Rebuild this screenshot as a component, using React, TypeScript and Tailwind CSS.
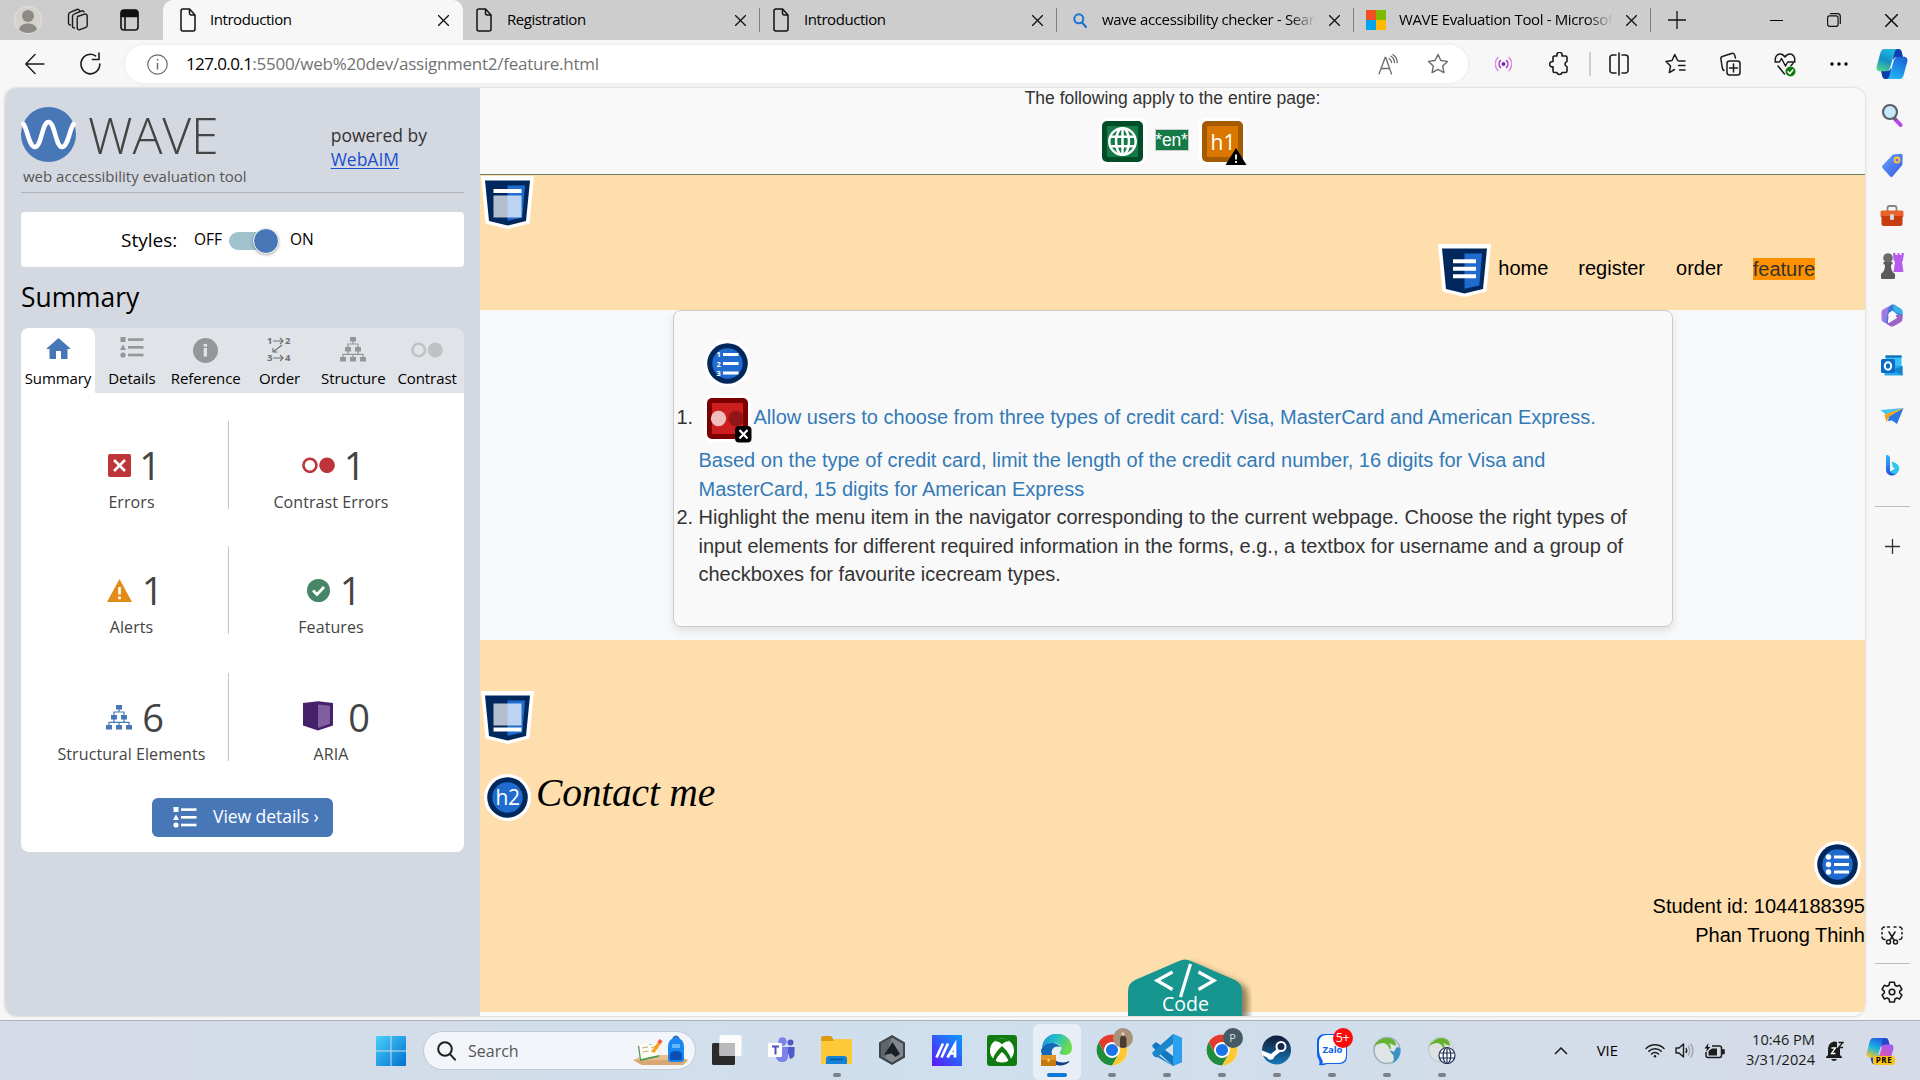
import type { ReactNode } from 'react';

type Kids = { children?: ReactNode };

/* ---------- browser chrome ---------- */

function FileIcon() {
  return (
    <svg width="16" height="24" viewBox="0 0 16 24" fill="none" stroke="#111" strokeWidth="1.5" strokeLinejoin="round" className="shrink-0">
      <path d="M1 3a2 2 0 0 1 2-2h6.5L15 7v14a2 2 0 0 1-2 2H3a2 2 0 0 1-2-2z" />
      <path d="M9.5 1v4.5a1.5 1.5 0 0 0 1.5 1.5h4" />
    </svg>
  );
}

function Cross({ size = 11 }: { size?: number }) {
  return (
    <svg width={size} height={size} viewBox="0 0 10 10" stroke="#111" strokeWidth="1.2" className="shrink-0">
      <path d="M0 0L10 10M10 0L0 10" />
    </svg>
  );
}

function Tab({ icon, title, active, faded }: { icon: ReactNode; title: string; active?: boolean; faded?: boolean }) {
  return (
    <div
      className={
        active
          ? 'flex h-10 w-[300px] shrink-0 items-center rounded-t-[10px] bg-[#f7f7f7] pr-[14px] pl-[17px]'
          : 'flex h-10 w-[297px] shrink-0 items-center pl-[13px]'
      }
    >
      <div className={active ? 'flex w-[29px] items-center' : 'flex w-[30px] items-center'}>{icon}</div>
      <div
        className={
          faded
            ? 'mb-0.5 w-[216px] overflow-hidden pl-[2px] text-[15px] leading-6 tracking-[-0.36px] whitespace-nowrap [mask-image:linear-gradient(to_right,#000_88%,transparent)]'
            : 'mb-0.5 w-[229px] pl-px text-[15px] leading-6 tracking-[-0.44px] whitespace-nowrap'
        }
      >
        {title}
      </div>
      <div className={faded ? 'ml-[13px]' : active ? 'ml-auto' : ''}>
        <Cross />
      </div>
      {!active && <div className="ml-auto h-[24px] w-px bg-[#808080]" />}
    </div>
  );
}

function TabBar() {
  return (
    <div className="flex h-10 items-center bg-[#cdcdcd]">
      <div className="flex w-[163px] shrink-0 items-center">
        <div className="ml-[14px] flex size-7 items-end justify-center overflow-hidden rounded-full border border-[#e4e2dd] bg-[#d4d1cc]">
          <svg width="26" height="26" viewBox="0 0 26 26" fill="#8d8984">
            <circle cx="13" cy="9" r="6" />
            <path d="M4 24c0-5 4-7.500 9-7.500s9 2.500 9 7.500a13 13 0 0 1-18 0z" />
          </svg>
        </div>
        <svg width="22" height="24" viewBox="0 0 22 24" fill="none" stroke="#1b1b1b" strokeWidth="1.4" strokeLinejoin="round" strokeLinecap="round" className="ml-[25px]">
          <path d="M10.500 8.500l7-2.300a2 2 0 0 1 2.700 1.800v9.500a2 2 0 0 1-1.300 1.900l-6 2.300a2 2 0 0 1-2.700-1.800V10" />
          <path d="M7.500 20a2 2 0 0 1-2-2V8.500a3 3 0 0 1 2-2.700L14.500 3a2 2 0 0 1 2.500 1" />
          <path d="M3.500 17A2 2 0 0 1 1.500 15V7a3 3 0 0 1 2-2.800L10 1.500a2 2 0 0 1 2.500 1" />
        </svg>
        <svg width="19" height="22" viewBox="0 0 19 22" fill="none" stroke="#111" strokeWidth="1.6" className="ml-[31px]">
          <rect x="1" y="1" width="17" height="20" rx="3" />
          <path d="M1.500 4a2.500 2.500 0 0 1 2.500-2.500h11A2.500 2.500 0 0 1 17.500 4v3.500h-16z" fill="#111" />
          <path d="M5 8v12.500" />
        </svg>
      </div>
      <Tab active title="Introduction" icon={<FileIcon />} />
      <Tab title="Registration" icon={<FileIcon />} />
      <Tab title="Introduction" icon={<FileIcon />} />
      <Tab
        faded
        title="wave accessibility checker - Search"
        icon={
          <svg width="14" height="15" viewBox="0 0 14 15" fill="none" stroke="#1a73d0" strokeWidth="2" strokeLinecap="round" className="ml-[3px]">
            <circle cx="5.800" cy="5.800" r="4.500" />
            <path d="M9.500 10l3.500 4" />
          </svg>
        }
      />
      <Tab
        faded
        title="WAVE Evaluation Tool - Microsoft"
        icon={
          <div className="-ml-px grid size-5 grid-cols-2 grid-rows-2">
            <i className="bg-[#f25022]" />
            <i className="bg-[#7fba00]" />
            <i className="bg-[#00a4ef]" />
            <i className="bg-[#ffb900]" />
          </div>
        }
      />
      <svg width="18" height="18" viewBox="0 0 18 18" stroke="#111" strokeWidth="1.3" className="ml-[17px]">
        <path d="M9 0V18M0 9H18" />
      </svg>
      <div className="ml-auto flex items-center pr-[22px]">
        <div className="mr-[44px] h-px w-[13px] bg-black" />
        <svg width="14" height="14" viewBox="0 0 14 14" fill="none" stroke="#111" strokeWidth="1.2" className="mr-[44px]">
          <rect x="0.600" y="2.800" width="10.500" height="10.500" rx="2" />
          <path d="M3 .7h7.500A2.800 2.800 0 0 1 13.300 3.500V11" />
        </svg>
        <Cross size={13} />
      </div>
    </div>
  );
}

function Cell({ children }: Kids) {
  return <div className="flex w-[55px] shrink-0 items-center justify-center">{children}</div>;
}

const line = { fill: 'none', stroke: '#1b1b1b', strokeWidth: 1.4, strokeLinejoin: 'round', strokeLinecap: 'round' } as const;

function StarPath() {
  return <path d="M11 1.500l2.900 6 6.600.9-4.800 4.600 1.200 6.600L11 16.400l-5.900 3.200 1.200-6.600L1.500 8.400l6.600-.9z" />;
}

function Copilot({ size, uid, colors }: { size: number; uid: string; colors: string[] }) {
  return (
    <svg width={size} height={size} viewBox="0 0 32 32">
      <defs>
        <linearGradient id={uid + 'a'} x1="0.600" y1="0" x2="0.200" y2="1">
          <stop offset="0" stopColor={colors[0]} />
          <stop offset="0.500" stopColor={colors[1]} />
          <stop offset="1" stopColor={colors[2]} />
        </linearGradient>
        <linearGradient id={uid + 'b'} x1="0.800" y1="0" x2="0.300" y2="1">
          <stop offset="0" stopColor={colors[3]} />
          <stop offset="1" stopColor={colors[4]} />
        </linearGradient>
      </defs>
      <path d="M18 1h4.500c2 0 2.800 1.200 3.300 3l1.200 5h-6c-2.500 0-3.500 1.500-4.200 4z" fill={colors[5]} />
      <path d="M14 31H9.500c-2 0-2.800-1.200-3.300-3L5 23h6c2.500 0 3.500-1.500 4.200-4z" fill={colors[5]} />
      <path d="M8.500 1H22c-2 0-3 1.500-3.500 3.500L14 20c-.6 2-1.800 3.300-4 3.300H4.500C1 23.300 0 21 .8 18L4.500 4.500C5.200 2.300 6.400 1 8.500 1z" fill={`url(#${uid}a)`} />
      <path d="M23.500 31H10c2 0 3-1.500 3.500-3.500L18 12c.6-2 1.800-3.300 4-3.300h5.500c3.500 0 4.500 2.300 3.700 5.300l-3.700 13.500c-.7 2.200-1.900 3.500-4 3.500z" fill={`url(#${uid}b)`} />
    </svg>
  );
}

function Toolbar() {
  return (
    <div className="flex h-12 items-center bg-[#f7f7f7]">
      <div className="flex w-[125px] shrink-0 items-center pl-[25px]">
        <svg width="20" height="22" viewBox="0 0 20 22" {...line}>
          <path d="M19 11H1M10 1.500L.8 11l9.200 9.500" />
        </svg>
        <svg width="21" height="24" viewBox="0 0 21 24" {...line} strokeWidth={1.6} className="ml-[35px]">
          <path d="M19.800 12A9.400 9.800 0 1 1 15.500 3.800M19 1v6.500h-6.500" />
        </svg>
      </div>
      <div className="flex h-[38px] w-[1343px] shrink-0 items-center rounded-full bg-white pl-[22px] shadow-[0_0_3px_1px_#ececec]">
        <svg width="21" height="21" viewBox="0 0 21 21" fill="none" stroke="#6b6b6b" strokeWidth="1.200">
          <circle cx="10.500" cy="10.500" r="9.700" />
          <path d="M10.500 9v6.500M10.500 5v1.600" strokeWidth="1.500" />
        </svg>
        <span className="ml-[18px] text-[17px] tracking-[-0.26px] text-[#727272]">
          <span className="tracking-[-0.600px] text-black">127.0.0.1</span>:5500/web%20dev/assignment2/feature.html
        </span>
        <div className="mr-[19px] ml-auto flex items-center gap-[29px]">
          <svg width="20" height="21" viewBox="0 0 20 21" fill="none" stroke="#6b6b6b" strokeWidth="1.300" strokeLinecap="round">
            <path d="M1 20L7.200 3.500h.6L13.500 20M3.300 14.500h8.200M11 4.500c1.700 1 2.500 2.300 2.500 4M13 2.300c2.300 1.500 3.400 3.500 3.400 6.200M15 .7c2.800 1.800 4.200 4.300 4.200 7.800" />
          </svg>
          <svg width="22" height="22" viewBox="0 0 22 22" {...line} stroke="#6b6b6b">
            <StarPath />
          </svg>
        </div>
      </div>
      <div className="ml-[8px] flex items-center">
        <Cell>
          <svg width="17" height="16" viewBox="0 0 17 16" fill="none" stroke="#9b30b8" strokeWidth="1.500" strokeLinecap="round">
            <circle cx="8.500" cy="8" r="2" fill="#8a1fb0" stroke="none" />
            <path d="M5.500 4.500a5 5 0 0 0 0 7M11.500 4.500a5 5 0 0 1 0 7" />
            <path d="M3 1.500a9 9 0 0 0 0 13M14 1.500a9 9 0 0 1 0 13" stroke="#dd8ae6" />
          </svg>
        </Cell>
        <Cell>
          <svg width="20" height="24" viewBox="0 0 20 24" {...line} strokeWidth={1.6}>
            <path d="M4 5.500a1.500 1.500 0 0 1 1.500-1.500H8a2.700 2.700 0 1 1 5 0h3.500A1.500 1.500 0 0 1 18 5.500V9.500a2.700 2.700 0 0 0 0 5.200V19a1.500 1.500 0 0 1-1.500 1.500h-3.400a2.700 2.700 0 0 1-5.200 0H5.500A1.500 1.500 0 0 1 4 19v-4.200a2.700 2.700 0 1 1 0-5.200z" />
          </svg>
        </Cell>
        <div className="ml-[3px] h-6 w-[2px] bg-[#cfcfcf]" />
        <Cell>
          <svg width="20" height="24" viewBox="0 0 20 24" {...line} strokeWidth={1.6} className="ml-px">
            <path d="M10 1v22M7 3H3.500A2.500 2.500 0 0 0 1 5.500v13A2.500 2.500 0 0 0 3.500 21H7M13 3h3.500A2.500 2.500 0 0 1 19 5.500v13a2.500 2.500 0 0 1-2.500 2.500H13" />
          </svg>
        </Cell>
        <Cell>
          <svg width="21" height="22" viewBox="0 0 21 22" {...line} strokeWidth={1.5} className="ml-[3px]">
            <path d="M13.500 8H20M13.500 12.500H20M14.500 17H20M12.500 7.200L9.800 1.500 7 7.500 1 8.400l4.500 4.600L4.300 19.600 9.500 16.500" />
          </svg>
        </Cell>
        <Cell>
          <svg width="21" height="24" viewBox="0 0 21 24" {...line} strokeWidth={1.5} className="ml-[3px]">
            <rect x="7" y="9" width="13" height="14" rx="2.500" />
            <path d="M13.500 12v8M9.500 16h8M4 18.500C2.800 18 2.500 17 2.300 16L.9 7A2.500 2.500 0 0 1 3 4.200L11.500 1.500A2.500 2.500 0 0 1 14.600 3L15.500 6" />
          </svg>
        </Cell>
        <Cell>
          <svg width="22" height="25" viewBox="0 0 22 25" {...line} strokeWidth={1.5} className="ml-[2px]">
            <path d="M1.500 9.500C.5 5 3 2 6 2c2.200 0 3.800 1.200 5 3 1.200-1.800 2.800-3 5-3 3 0 5.500 3 4.500 7.500M1 10h4.500l2-3.500 4 7.500 2.200-4H21M4 14l6.500 8M17 13.500l2-2" />
            <circle cx="16.500" cy="19.500" r="5" fill="#107c10" stroke="none" />
            <path d="M14 19.700l1.900 1.900 3-3.600" stroke="#fff" />
          </svg>
        </Cell>
        <Cell>
          <svg width="18" height="4" viewBox="0 0 18 4" className="ml-px">
            <circle cx="2" cy="2" r="1.700" />
            <circle cx="9" cy="2" r="1.700" />
            <circle cx="16" cy="2" r="1.700" />
          </svg>
        </Cell>
        <div className="flex w-[52px] justify-center">
          <Copilot size={32} uid="cpt" colors={['#20b8e0', '#1390c4', '#52d48c', '#1a63d8', '#22b6f5', '#0b3fae']} />
        </div>
      </div>
    </div>
  );
}

/* ---------- WAVE side panel ---------- */

function ListShapes({ color }: { color: string }) {
  return (
    <svg width="24" height="21" viewBox="0 0 24 21" fill={color}>
      <rect x="0.500" y="0" width="5" height="5" />
      <path d="M3 7.500l3 5.500H0z" />
      <circle cx="3" cy="18" r="2.600" />
      <rect x="8" y="1.300" width="15.500" height="2.600" />
      <rect x="8" y="9" width="15.500" height="2.600" />
      <rect x="8" y="16.700" width="15.500" height="2.600" />
    </svg>
  );
}

function Tree({ color }: { color: string }) {
  return (
    <svg width="26" height="25" viewBox="0 0 26 25" fill={color}>
      <rect x="10" y="0" width="6" height="4.500" />
      <rect x="5" y="10" width="6" height="4.500" />
      <rect x="15" y="10" width="6" height="4.500" />
      <rect x="0" y="20" width="6" height="4.500" />
      <rect x="10" y="20" width="6" height="4.500" />
      <rect x="20" y="20" width="6" height="4.500" />
      <path d="M13 4v3M8 10.500V7h10v3.500M8 14v3.300M18 14v3.300M3 20.500v-3.200h20v3.200M13 17v3.500" fill="none" stroke={color} strokeWidth="1.200" />
    </svg>
  );
}

function Eyes({ color, w }: { color: string; w: number }) {
  return (
    <svg width={w} height={w / 2} viewBox="0 0 32 16">
      <circle cx="7.700" cy="8" r="6.300" fill="none" stroke={color} strokeWidth="2.600" />
      <circle cx="24.300" cy="8" r="7.600" fill={color} />
    </svg>
  );
}

function PanelTab({ icon, label, active }: { icon: ReactNode; label: string; active?: boolean }) {
  return (
    <div
      className={
        active
          ? 'flex h-[65px] w-[74px] shrink-0 flex-col items-center rounded-t-lg bg-white'
          : 'flex h-[65px] w-[73.800px] shrink-0 flex-col items-center'
      }
    >
      <div className="flex h-[43px] items-center justify-center">{icon}</div>
      <div className="-mt-[2px] text-[15px] leading-[18px] tracking-[-0.08px] whitespace-nowrap">{label}</div>
    </div>
  );
}

function Stat({ icon, value, label, right, gap }: { icon: ReactNode; value: string; label: string; right?: boolean; gap: string }) {
  return (
    <div className={right ? 'flex w-[204px] flex-col items-center' : 'flex h-[88px] w-[194px] flex-col items-center border-r border-[#c4c4c4]'}>
      <div className={`mt-[19px] flex h-[50px] items-center ${gap}`}>
        {icon}
        <span className="text-[38px] leading-[50px] text-[#444]">{value}</span>
      </div>
      <div className="text-base leading-6 tracking-[0.08px] text-[#444]">{label}</div>
    </div>
  );
}

function WavePanel() {
  return (
    <aside className="flex w-[475px] shrink-0 flex-col bg-[#d4d8e0] px-4">
      <div className="flex h-[105px] justify-between border-b border-[#b0b2b5] pt-[19px]">
        <div>
          <div className="flex items-center">
            <svg width="55" height="55" viewBox="0 0 55 55">
              <circle cx="27.500" cy="27.500" r="27.500" fill="#4877b7" />
              <path d="M2.500 17C6 21 8 40 14 40c6.500 0 7-25 13.500-25S34.500 40 41 40c6 0 8-19 11.500-23" fill="none" stroke="#fff" strokeWidth="4.600" strokeLinecap="round" />
            </svg>
            <span className="mt-px ml-[12px] text-[50px] leading-[54px] font-light tracking-[-0.200px] text-[#444]">WAVE</span>
          </div>
          <div className="mt-[4px] ml-[2px] text-[15px] leading-5 text-[#555]">web accessibility evaluation tool</div>
        </div>
        <div className="mt-[16px] mr-[37px] text-[17.500px] leading-6 text-[#333]">
          powered by
          <br />
          <span className="text-[#1a50d0] underline underline-offset-2">WebAIM</span>
        </div>
      </div>
      <div className="mt-[19px] flex h-[55px] items-center rounded bg-white pt-[2px] pl-[100px]">
        <span className="w-[73px] text-[19px]">Styles:</span>
        <span className="-mt-px w-[35px] text-[15.500px]">OFF</span>
        <span className="flex h-[18px] w-[50px] items-center justify-end rounded-full bg-[#a0c2cc]">
          <i className="size-[26px] shrink-0 rounded-full border border-white bg-[#4877b7] shadow-[0_1px_3px_#0005]" />
        </span>
        <span className="-mt-px ml-[11px] text-[15.500px]">ON</span>
      </div>
      <h2 className="flex h-[61px] items-center text-[26.400px]">Summary</h2>
      <div className="flex h-[65px] rounded-t-lg bg-[#e0e3e8]">
        <PanelTab
          active
          label="Summary"
          icon={
            <svg width="25" height="21" viewBox="0 0 25 21" fill="#4877b7" className="-mt-[2px]">
              <path d="M12.500 0L25 11h-3.500v10h-6.500v-8h-5v8H3.500V11H0z" />
            </svg>
          }
        />
        <PanelTab label="Details" icon={<div className="-mt-[4px] flex"><ListShapes color="#949799" /></div>} />
        <PanelTab
          label="Reference"
          icon={
            <svg width="25" height="25" viewBox="0 0 25 25" className="mt-px">
              <circle cx="12.500" cy="12.500" r="12.500" fill="#949799" />
              <path d="M10.700 10h3.300v8.500h-3.300zM10.700 6h3.300v2.800h-3.300z" fill="#e0e3e8" />
            </svg>
          }
        />
        <PanelTab
          label="Order"
          icon={
            <svg width="24" height="25" viewBox="0 0 24 25" fill="none" stroke="#6f7173" strokeWidth="1.100">
              <g fill="#6f7173" stroke="none" fontSize="9.500" fontWeight="700" fontFamily="Open Sans">
                <text x="0" y="7">1</text>
                <text x="18" y="7">2</text>
                <text x="0" y="24">3</text>
                <text x="18" y="24">4</text>
              </g>
              <path d="M6 4h10M13 1l3 3-3 3M6 21h10M13 18l3 3-3 3M15 8l-9 7M6 11v4h4.500" />
            </svg>
          }
        />
        <PanelTab label="Structure" icon={<Tree color="#949799" />} />
        <PanelTab label="Contrast" icon={<div className="mt-px flex"><Eyes color="#bfc1c5" w={32} /></div>} />
      </div>
      <div className="h-[459px] rounded-b-lg bg-white">
        <div className="flex h-[125px] items-start pt-[28px] pl-[14px]">
          <Stat
            gap="gap-[8px] pl-[6px]"
            label="Errors"
            value="1"
            icon={
              <svg width="23" height="23" viewBox="0 0 23 23">
                <rect width="23" height="23" rx="2" fill="#bd3538" />
                <path d="M6 6l11 11M17 6L6 17" stroke="#fff" strokeWidth="2.600" />
              </svg>
            }
          />
          <Stat right gap="gap-[9px] pl-[5px]" label="Contrast Errors" value="1" icon={<Eyes color="#bd3538" w={33} />} />
        </div>
        <div className="flex h-[127px] items-start pt-[28px] pl-[14px]">
          <Stat
            gap="gap-[10px] pl-[7px]"
            label="Alerts"
            value="1"
            icon={
              <svg width="25" height="23" viewBox="0 0 25 23">
                <path d="M12.500 0L25 23H0z" fill="#e28b17" />
                <path d="M12.500 8v7.500M12.500 17.500v2.800" stroke="#fff" strokeWidth="2.600" />
              </svg>
            }
          />
          <Stat
            right
            gap="gap-[10px] pl-[6px]"
            label="Features"
            value="1"
            icon={
              <svg width="23" height="23" viewBox="0 0 23 23">
                <circle cx="11.500" cy="11.500" r="11.500" fill="#468566" />
                <path d="M6 11.500l4 4 7-7.500" fill="none" stroke="#fff" strokeWidth="2.800" />
              </svg>
            }
          />
        </div>
        <div className="flex h-[153px] items-start pt-[28px] pl-[14px]">
          <Stat gap="gap-[10px] pl-[7px]" label="Structural Elements" value="6" icon={<Tree color="#4877b7" />} />
          <Stat
            right
            gap="gap-[15px] pl-[11px]"
            label="ARIA"
            value="0"
            icon={
              <svg width="30" height="30" viewBox="0 0 30 30" className="-mt-[3px]">
                <path d="M0 2L15 .3 30 2v22.500L15 29.500 0 24.500z" fill="#47206b" />
                <path d="M15 3.500l12 1.300v18L15 27z" fill="#7f5f9e" />
              </svg>
            }
          />
        </div>
        <div className="ml-[131px] flex h-[39px] w-[181px] items-center rounded-md bg-[#4877b7] pl-[21px] text-[17.500px] tracking-[-0.040px] text-white">
          <ListShapes color="#fff" />
          <span className="-mt-0.5 ml-[16px] whitespace-nowrap">View details ›</span>
        </div>
      </div>
    </aside>
  );
}

/* ---------- annotated web page ---------- */

function Shield({ children }: Kids) {
  return (
    <svg width="53" height="53" viewBox="0 0 53 53" className="shrink-0">
      <path d="M0 0h53l-4.500 47.500L26.500 53 4.500 47.500z" fill="#fff" />
      <path d="M4 4.500h45L45 45l-18.500 4.500L8 45z" fill="#00285c" />
      <path d="M26.500 9.500h17.500l-2.700 32-14.800 3.300z" fill="#206bcf" />
      {children}
    </svg>
  );
}

function Disc({ children }: Kids) {
  return (
    <svg width="47" height="47" viewBox="0 0 47 47" className="shrink-0">
      <circle cx="23.500" cy="23.500" r="23.500" fill="#fff" />
      <circle cx="23.500" cy="23.500" r="20.300" fill="#00285c" />
      <circle cx="23.500" cy="23.500" r="15.200" fill="#206bcf" />
      {children}
    </svg>
  );
}

function Tile({ border, fill, children }: Kids & { border: string; fill: string }) {
  return (
    <svg width="50" height="50" viewBox="0 0 50 50" className="shrink-0 overflow-visible">
      <rect x="0" y="0" width="47" height="47" rx="7" fill="#fff" />
      <rect x="3" y="3" width="41" height="41" rx="5" fill={border} />
      <rect x="8" y="8" width="31" height="31" fill={fill} />
      {children}
    </svg>
  );
}

function PageSummary() {
  return (
    <div className="flex h-[87px] flex-col items-center border-b border-[#6f8266] bg-[#f9f9f9] text-[#333]">
      <div className="h-[30px] text-[17.500px] leading-[20px]">The following apply to the entire page:</div>
      <div className="flex h-[50px] items-start pl-[2px]">
        <Tile border="#014d27" fill="#147a48">
          <g fill="none" stroke="#fff" strokeWidth="2.500">
            <circle cx="23.500" cy="23.500" r="13.200" />
            <ellipse cx="23.500" cy="23.500" rx="6.500" ry="13.200" />
            <path d="M23.500 10v27M11.500 18.800h24M11.500 28.200h24" />
          </g>
        </Tile>
        <div className="mt-[11px] ml-[6px] flex h-[22px] w-[34px] items-center justify-center border border-[#ccc] bg-[#147a48] text-[17.500px] tracking-[-0.200px] whitespace-nowrap text-white">
          *en*
        </div>
        <div className="ml-[10px]">
          <Tile border="#a35a00" fill="#da7700">
            <text x="24" y="31.500" textAnchor="middle" fontSize="21" fill="#fff" fontFamily="Open Sans">
              h1
            </text>
            <path d="M37 30l10.500 17h-21z" />
            <path d="M37 36.500v5M37 43v2" stroke="#fff" strokeWidth="1.800" />
          </Tile>
        </div>
      </div>
    </div>
  );
}

function WebPage() {
  return (
    <main className="flex w-[1385px] shrink-0 flex-col bg-[#f8f9fb] font-['Liberation_Sans',Arial,sans-serif] text-xl leading-[28.570px]">
      <PageSummary />
      <header className="h-[135px] bg-[#ffdead] pl-px text-black">
        <div className="flex h-[69px] items-start pt-px">
          <Shield>
            <rect x="12.500" y="13" width="28" height="4" fill="#fff" />
            <rect x="12.500" y="19.500" width="28" height="22" fill="#fff" fillOpacity="0.700" />
          </Shield>
        </div>
        <nav className="flex h-[53px] items-center justify-end pr-[50px]">
          <Shield>
            <path d="M15 15.200h23v4H15zM15 22.700h23v4H15zM15 30.200h23v4H15z" fill="#fff" />
          </Shield>
          <span className="-mt-1 ml-[7px]">home</span>
          <span className="-mt-1 ml-[30px]">register</span>
          <span className="-mt-1 ml-[31px]">order</span>
          <span className="-mt-1 ml-[30px] bg-[#ff9100] leading-[22px] text-[#333]">feature</span>
        </nav>
      </header>
      <section className="ml-[193px] h-[317px] w-[1000px] rounded-lg border border-[#ccc] bg-[#f9f9f9] pt-[29px] pl-[24px] text-[#333] shadow-[0_4px_8px_#0000001a]">
        <div className="flex h-[55px] items-start pl-[5.500px]">
          <Disc>
            <g fill="#fff" fontSize="7.500" fontWeight="700" fontFamily="Open Sans">
              <text x="12.500" y="17">1</text>
              <text x="12.500" y="26.500">2</text>
              <text x="12.500" y="36">3</text>
            </g>
            <path d="M19 13h15.500v3H19zM19 22h15.500v3H19zM19 31.500h15.500v3H19z" fill="#fff" />
          </Disc>
        </div>
        <ol className="pl-[0.500px] whitespace-nowrap">
          <li className="text-[#337ab7]">
            <div className="flex h-[65px]">
              <span className="-ml-[22px] w-[27px] pt-[8px] text-[#333]">1.</span>
              <div>
                <Tile border="#7c0000" fill="#cc1e1f">
                  <circle cx="14.500" cy="23.500" r="7.700" fill="#f0bdbd" />
                  <circle cx="32" cy="23.500" r="7.700" fill="#8f1517" />
                  <rect x="31" y="31" width="16.500" height="16.500" rx="4" />
                  <path d="M35.500 35l8 8.500M43.500 35l-8 8.500" stroke="#fff" strokeWidth="2.200" />
                </Tile>
              </div>
              <span className="pt-[8px]">Allow users to choose from three types of credit card: Visa, MasterCard and American Express.</span>
            </div>
            <div className="-mt-[14px]">
              Based on the type of credit card, limit the length of the credit card number, 16 digits for Visa and
              <br />
              MasterCard, 15 digits for American Express
            </div>
          </li>
          <li className="flex">
            <span className="-ml-[22px] w-[22px]">2.</span>
            <span>
              Highlight the menu item in the navigator corresponding to the current webpage. Choose the right types of
              <br />
              input elements for different required information in the forms, e.g., a textbox for username and a group of
              <br />
              checkboxes for favourite icecream types.
            </span>
          </li>
        </ol>
      </section>
      <footer className="relative mt-[13px] h-[372px] bg-[#ffdead] pt-[51px] pl-px text-black">
        <Shield>
          <rect x="12.500" y="12.500" width="28" height="22" fill="#fff" fillOpacity="0.700" />
          <rect x="12.500" y="36.500" width="28" height="4" fill="#fff" />
        </Shield>
        <div className="mt-[30px] flex items-center pl-[3px]">
          <Disc>
            <text x="23.500" y="31" textAnchor="middle" fontSize="21" fill="#fff" fontFamily="Open Sans" letterSpacing="-0.500">
              h2
            </text>
          </Disc>
          <h2 className="-mt-[8px] ml-[5px] font-['Liberation_Serif',serif] text-[39.500px] leading-[47px] tracking-[-0.200px] italic">Contact me</h2>
        </div>
        <div className="mt-[20px] flex justify-end pr-[4px]">
          <Disc>
            <path d="M20 14.500h15v3H20zM20 22h15v3H20zM20 29.500h15v3H20z" fill="#fff" />
            <circle cx="14.500" cy="16" r="2.700" fill="#fff" />
            <circle cx="14.500" cy="23.500" r="2.700" fill="#fff" />
            <circle cx="14.500" cy="31" r="2.700" fill="#fff" />
          </Disc>
        </div>
        <div className="mt-[4px] text-right">
          Student id: 1044188395
          <br />
          Phan Truong Thinh
        </div>
        <div className="absolute top-[318px] left-[648px] flex h-[58px] w-[124px] overflow-hidden">
          <svg width="124" height="58" viewBox="0 0 124 58">
            <defs>
              <filter id="codeShadow" x="-20%" y="-20%" width="140%" height="140%">
                <feDropShadow dx="6" dy="4" stdDeviation="3" floodColor="#4a3a20" floodOpacity="0.600" />
              </filter>
            </defs>
            <path d="M0 60V34q0-9 7-12L51 3q6-3 12 0l44 19q7 3 7 12v26z" fill="#17968e" filter="url(#codeShadow)" />
            <path d="M44.500 14L29 22.500 44.500 31.500M70.500 14l15.500 8.500-15.500 9M62.500 6L52.500 39" fill="none" stroke="#fff" strokeWidth="3.200" />
            <text x="57.500" y="53" textAnchor="middle" fontSize="19.500" fill="#fff" fontFamily="Open Sans">
              Code
            </text>
          </svg>
        </div>
      </footer>
    </main>
  );
}

/* ---------- Edge sidebar ---------- */

function Slot({ children }: Kids) {
  return <div className="flex h-[50px] items-center justify-center">{children}</div>;
}

function EdgeSidebar() {
  return (
    <aside className="flex w-[55px] shrink-0 flex-col pt-[2px] pr-px">
      <Slot>
        <svg width="22" height="24" viewBox="0 0 22 24">
          <path d="M13 15l6.500 7" stroke="#b844f0" strokeWidth="4" strokeLinecap="round" />
          <path d="M12.500 14l2.500 3" stroke="#666" strokeWidth="3" />
          <circle cx="9" cy="9" r="7" fill="#c5e8fb" stroke="#5b6066" strokeWidth="2.200" />
        </svg>
      </Slot>
      <Slot>
        <svg width="22" height="25" viewBox="0 0 22 25">
          <defs>
            <linearGradient id="tag" x1="0" y1="0" x2="1" y2="1">
              <stop offset="0" stopColor="#6aa5ff" />
              <stop offset="1" stopColor="#3358e0" />
            </linearGradient>
          </defs>
          <path d="M12 1.500L20 .8q1.700 0 1.700 1.700l-.4 9.500L11.500 23.500q-1.200 1.200-2.300 0L1.500 15q-1-1.200 0-2.500z" fill="url(#tag)" />
          <circle cx="16" cy="7" r="2.500" fill="#6b7ac0" stroke="#ffc83d" strokeWidth="1.800" />
        </svg>
      </Slot>
      <Slot>
        <svg width="24" height="22" viewBox="0 0 24 22" className="mt-[2px]">
          <path d="M7.500 6V3q0-2 2-2h5q2 0 2 2v3" fill="none" stroke="#848484" strokeWidth="1.800" />
          <rect x="0.500" y="5.500" width="23" height="7" rx="1.500" fill="#e8622a" />
          <path d="M1.500 11h21v8q0 2-2 2h-17q-2 0-2-2z" fill="#c73c11" />
          <rect x="10" y="9" width="4" height="6" rx="1.500" fill="#d5d8dc" />
        </svg>
      </Slot>
      <Slot>
        <svg width="24" height="28" viewBox="0 0 24 28" className="mt-px">
          <path d="M13 1h2.500v2h2V1h2v2h2V1H24l-1 7-1 2 1.500 10H13.500L15 10l-1.500-2z" fill="#b85cf0" />
          <circle cx="8" cy="6" r="4.800" fill="#6b6b6b" />
          <path d="M3.500 10h9v2.500H11c0 5 1 7 4 9.500v3.500q0 1.500-1.500 1.500h-11Q1 27 1 25.500V22c3-2.500 4-4.500 4-9.500H3.500z" fill="#5b5b5b" />
        </svg>
      </Slot>
      <Slot>
        <svg width="22" height="23" viewBox="0 0 22 23">
          <path d="M10 1L2 5.500Q.5 6.500.5 8v7q0 2 1.500 3l4 1.500 2-7z" fill="#9c7be0" />
          <path d="M10.500.8q1.500-.8 3 0L20 5q1.500 1 1.500 3v5l-6-3-4-3.500L7 10v9l-2 .5L7.500 4z" fill="#3f78db" />
          <path d="M11 0l9 5q1.500 1 1.500 3v2.500L14 8z" fill="#35b5e8" />
          <path d="M21.500 11v4q0 2-1.500 3l-7 4q-2 1-4 0l-5-3q3 .8 5-.7l7-4.300-1.500-3z" fill="#9b62c8" />
          <circle cx="11" cy="11.500" r="3.700" fill="#f7f7f7" />
        </svg>
      </Slot>
      <Slot>
        <svg width="22" height="22" viewBox="0 0 22 22" className="mt-px">
          <rect x="4.500" y="0.500" width="16" height="12" fill="#36c0f5" />
          <rect x="4.500" y="0.500" width="16" height="2" fill="#1066b5" />
          <path d="M3.500 10l18 1v9.500h-18z" fill="#28a8ea" />
          <path d="M21.500 11v9.500L11 15z" fill="#1484d0" />
          <rect x="0" y="4" width="14" height="14" rx="1.500" fill="#0a6cc8" />
          <ellipse cx="7" cy="11" rx="3.200" ry="3.700" fill="none" stroke="#fff" strokeWidth="2" />
        </svg>
      </Slot>
      <Slot>
        <svg width="24" height="18" viewBox="0 0 24 18" className="mt-[2px]">
          <path d="M.5 3L23.500 1 6 7.500z" fill="#45c5f0" />
          <path d="M23.500 1L17 17l-5-3.500-4 .5 1-5z" fill="#2a78e4" />
          <path d="M23.500 1L4.500 7.500 6.500 15.500l2.300-5.500z" fill="#f5a31d" />
        </svg>
      </Slot>
      <Slot>
        <svg width="15" height="22" viewBox="0 0 15 22">
          <defs>
            <linearGradient id="bing" x1="0" y1="0" x2="0" y2="1">
              <stop offset="0" stopColor="#37b8f5" />
              <stop offset="1" stopColor="#2250dd" />
            </linearGradient>
          </defs>
          <path d="M1 .5l3 1.200q1 .5 1 1.500v14.500L9 15.500l5-1q-.5 4-3.500 6-3 1.700-6 .4Q1 19.500 1 16z" fill="url(#bing)" />
          <path d="M6.500 7.500l4 1.500q4 2 3.800 6-1 3.500-4.500 5.500L5 18l5-3-2-1.700z" fill="#2cc5ef" />
        </svg>
      </Slot>
      <div className="mx-auto mt-[16px] h-px w-[35px] bg-[#bdbdbd]" />
      <svg width="15" height="15" viewBox="0 0 15 15" stroke="#333" strokeWidth="1.300" className="mx-auto mt-[32px]">
        <path d="M7.500 0V15M0 7.500H15" />
      </svg>
      <div className="mt-auto mb-[17px] flex flex-col items-center">
        <svg width="22" height="19" viewBox="0 0 22 19" {...line} strokeWidth={1.5}>
          <path d="M4 13.500H3.500a2.500 2.500 0 0 1-2.500-2.500M1 8V6.500M1 3.500A2.500 2.500 0 0 1 3.500 1M6.500 1h2M13 1h2M18.500 1A2.500 2.500 0 0 1 21 3.500M21 6.500V8M21 11a2.500 2.500 0 0 1-2.500 2.500M8 6l5 8M14 6l-5 8" />
          <circle cx="7.500" cy="16" r="2" />
          <circle cx="14.500" cy="16" r="2" />
        </svg>
        <div className="mt-[18px] h-px w-[35px] bg-[#bdbdbd]" />
        <svg width="22" height="22" viewBox="0 0 22 22" {...line} strokeWidth={1.6} className="mt-[17px]">
          <path d="M8.700 1.200h4.600l.7 3 1.700 1 3-.9 2.200 3.900-2.200 2.100v1.600l2.200 2.100-2.200 3.900-3-.9-1.700 1-.7 3H8.700l-.7-3-1.700-1-3 .9L1.100 14l2.200-2.100v-1.600L1.100 8.200l2.200-3.900 3 .9 1.700-1z" />
          <circle cx="11" cy="11" r="2.800" />
        </svg>
      </div>
    </aside>
  );
}

/* ---------- Windows taskbar ---------- */

function TaskIcon({ children, state }: Kids & { state?: 'open' | 'focus' }) {
  return (
    <div className={state === 'focus' ? 'mx-[3.500px] flex h-[56px] w-[48px] flex-col items-center rounded-md bg-[#e8eef6]' : 'flex h-[56px] w-[55px] flex-col items-center'}>
      <div className="relative mt-[9px] flex h-[34px] items-center justify-center">{children}</div>
      {state === 'open' && <i className="mt-[6px] h-[4px] w-[8px] rounded-full bg-[#7b8087]" />}
      {state === 'focus' && <i className="mt-[6px] h-[4px] w-[20px] rounded-full bg-[#0a78d4]" />}
    </div>
  );
}

function Chrome({ children }: Kids) {
  return (
    <>
      <svg width="32" height="32" viewBox="0 0 32 32">
        <circle cx="16" cy="16" r="15.500" fill="#fff" />
        <path d="M2.600 8.250A15.500 15.500 0 0 1 29.400 8.250H16a7.750 7.750 0 0 0-6.700 11.600z" fill="#e33b2e" />
        <path d="M29.400 8.250A15.500 15.500 0 0 1 16 31.500l6.700-11.600A7.750 7.750 0 0 0 16 8.250z" fill="#fcc934" />
        <path d="M16 31.500A15.500 15.500 0 0 1 2.600 8.250l6.700 11.600a7.750 7.750 0 0 0 13.400 0z" fill="#1e8e3e" />
        <circle cx="16" cy="16" r="7.700" fill="#fff" />
        <circle cx="16" cy="16" r="6.100" fill="#1a73e8" />
      </svg>
      <div className="absolute -top-[5px] -right-[5px] flex size-5 items-center justify-center overflow-hidden rounded-full">{children}</div>
    </>
  );
}

function Taskbar() {
  return (
    <div className="flex h-[60px] shrink-0 items-center border-t border-[#a9b0b9] bg-linear-to-r from-[#d6dbe7] via-[#cfdfed] to-[#d6dbe7]">
      <svg width="30" height="30" viewBox="0 0 30 30" className="ml-[376px] shrink-0">
        <defs>
          <linearGradient id="win" x1="0" y1="0" x2="1" y2="1">
            <stop offset="0" stopColor="#4bd0fb" />
            <stop offset="1" stopColor="#0070cf" />
          </linearGradient>
        </defs>
        <path d="M0 1q0-1 1-1h13.500v14.500H0zM15.500 0H29q1 0 1 1v13.500H15.500zM0 15.500h14.500V30H1q-1 0-1-1zM15.500 15.500H30V29q0 1-1 1H15.500z" fill="url(#win)" />
      </svg>
      <div className="ml-[17px] flex h-[39px] w-[273px] shrink-0 items-center rounded-full border border-[#bfcad6] bg-[#f2f5f9] pl-[13px]">
        <svg width="19" height="20" viewBox="0 0 19 20" fill="none" stroke="#1f1f1f" strokeWidth="2" strokeLinecap="round">
          <circle cx="8" cy="8" r="6.800" />
          <path d="M13 13.200l5 5.500" />
        </svg>
        <span className="ml-[12px] text-[16px] text-[#555]">Search</span>
        <svg width="57" height="32" viewBox="0 0 57 32" className="mr-[6px] ml-auto">
          <path d="M1 25l12-5h34l9 5-5 5H10z" fill="#e9bf8e" />
          <path d="M1 25h55l-5 5H10z" fill="#d9a774" />
          <path d="M6 11l11-2 9 1 1 12-19 4z" fill="#4d9b53" />
          <path d="M7 9l9-1 2 2 8-3 1 13-9 2-9 2z" fill="#fffdf2" />
          <path d="M10 13l6-1M10.500 17l6-1M19 13l5-2M19 17l5-2" stroke="#b8a98a" />
          <path d="M21 17l7-10" stroke="#f5a524" strokeWidth="3.500" />
          <path d="M27 8l2-3" stroke="#ef5b5b" strokeWidth="4" />
          <path d="M41 4q3-5 6 0" fill="none" stroke="#1565c0" strokeWidth="2" />
          <path d="M36 12q0-9 8-9t8 9v12q0 3-3 3H39q-3 0-3-3z" fill="#1a86f0" />
          <path d="M38 20q0-4 6-4t6 4v5H38z" fill="#0a4fb5" />
          <path d="M40 9h8v4h-8z" fill="#5fb8ff" />
        </svg>
      </div>
      <div className="ml-[3px] flex shrink-0 self-end">
        <TaskIcon>
          <svg width="30" height="32" viewBox="0 0 30 32">
            <rect x="0" y="9" width="23" height="22" rx="1.500" fill="#2b2b2b" />
            <rect x="7.500" y="1" width="22" height="21" rx="1.500" fill="#fbfbfb" />
            <path d="M7.500 9H23v13H7.500z" fill="#b9babb" />
          </svg>
        </TaskIcon>
        <TaskIcon>
          <svg width="27" height="26" viewBox="0 0 27 26">
            <circle cx="14.500" cy="4.500" r="4.200" fill="#7b83eb" />
            <circle cx="22.500" cy="5.500" r="3" fill="#5059c9" />
            <path d="M18 10h8.500v7q0 4-4.500 5z" fill="#5059c9" />
            <path d="M8.500 10H20v9q0 6-6 6-5 0-6-5z" fill="#7b83eb" />
            <rect x="0" y="6" width="14" height="14" rx="1" fill="#fff" />
            <path d="M4 9.500h7M7.500 9.500v8" stroke="#4b53bc" strokeWidth="2" />
          </svg>
        </TaskIcon>
        <TaskIcon state="open">
          <svg width="31" height="28" viewBox="0 0 31 28">
            <path d="M0 2q0-2 2-2h8l3 4h15v8H0z" fill="#e09b0c" />
            <path d="M0 5h12l3-2h14q2 0 2 2v23H0z" fill="#fdc938" />
            <path d="M5 28v-5q0-3 3-3h15q3 0 3 3v5z" fill="#1583d8" />
            <path d="M9 23.500h13" stroke="#0a559c" strokeWidth="1.500" />
          </svg>
        </TaskIcon>
        <TaskIcon>
          <svg width="28" height="31" viewBox="0 0 28 31">
            <path d="M14 0l13 7.500v15L14 30 1 22.500v-15z" fill="#3e444a" />
            <path d="M14 2.500l11 6.200V21L14 27.500 3 21V8.700z" fill="#80878e" />
            <path d="M14 2.500L3 8.700V21l4 2z" fill="#5e666e" />
            <path d="M14.500 7l7.500 12-4.500 3-4-3.500-7.500 1.500z" fill="#1c2024" />
          </svg>
        </TaskIcon>
        <TaskIcon>
          <svg width="30" height="31" viewBox="0 0 30 31">
            <defs>
              <linearGradient id="armoury" x1="0" y1="1" x2="1" y2="0">
                <stop offset="0" stopColor="#5b18f5" />
                <stop offset="1" stopColor="#0a9bff" />
              </linearGradient>
            </defs>
            <rect width="30" height="31" fill="url(#armoury)" />
            <path d="M4.500 22.500L11 8.500M9.500 22.500L16 8.500M15.500 22.500L23 9.500v13M18.500 18.500H23" fill="none" stroke="#fff" strokeWidth="2.700" />
          </svg>
        </TaskIcon>
        <TaskIcon>
          <svg width="30" height="31" viewBox="0 0 30 31">
            <rect width="30" height="31" rx="3" fill="#107c10" />
            <circle cx="15" cy="15.500" r="12" fill="#fff" />
            <path d="M7 6.500c3-.8 5.500.8 8 2.700 2.500-1.900 5-3.500 8-2.700C21 4.700 18.500 3.500 15 3.500S9 4.700 7 6.500zM6 24.500c.5-4.500 5-10 9-13.500 4 3.500 8.500 9 9 13.500-1.300 1.200-2 1.500-2.500 1.700-1-3.200-3.500-6.700-6.500-9.200-3 2.500-5.500 6-6.500 9.200-.7-.3-1.500-.8-2.500-1.700z" fill="#107c10" />
          </svg>
        </TaskIcon>
        <TaskIcon state="focus">
          <svg width="31" height="32" viewBox="0 0 31 32">
            <defs>
              <linearGradient id="edgeTop" x1="0" y1="0" x2="1" y2="0.300">
                <stop offset="0" stopColor="#1b8fd6" />
                <stop offset="0.500" stopColor="#25bfc9" />
                <stop offset="1" stopColor="#6fdc4c" />
              </linearGradient>
            </defs>
            <path d="M1 14A15 14.500 0 0 1 31 14c0 5-3.500 7-7 7s-5.500-1.200-5.500-2.500S20.500 17 20.500 14.500 17 9 12 9 3 11 1 14z" fill="url(#edgeTop)" />
            <path d="M0 17C1 11.500 6 8.500 11.500 9c4 .3 7 2.500 8 4-6-2-9 2-9 6 0 6 5.500 10 11.500 10q3 0 6-2Q23 32 15.500 31 2 30 0 17z" fill="#1368b8" />
            <path d="M10.500 18c-.5 6 5 11 11.500 10.500q3 0 6-1.500.8 0 .3.800C25 31.500 20 32 16 31 11 29 9 23 10.500 18z" fill="#123f87" />
            <rect x="0" y="21" width="15" height="11" fill="#c9780f" />
            <rect x="0" y="21" width="15" height="5" fill="#e0942a" />
            <rect x="6.500" y="25" width="2" height="2.500" fill="#ffe18a" />
          </svg>
        </TaskIcon>
        <TaskIcon state="open">
          <Chrome>
            <svg width="20" height="20" viewBox="0 0 20 20">
              <rect width="20" height="20" fill="#a8927b" />
              <path d="M7 20V11q0-2 1.500-3-1-3.500 1.500-4 3 .5 1.500 4 2 1 2 3v9z" fill="#4c3b31" />
              <circle cx="10" cy="6" r="2" fill="#e4c7ac" />
            </svg>
          </Chrome>
        </TaskIcon>
        <TaskIcon state="open">
          <svg width="30" height="32" viewBox="0 0 30 32">
            <path d="M21 0l9 4v24l-9 4L1 13.500q-1.500-1.500 0-3l2-1.800q1-.8 2.200 0L21 21z" fill="#1277be" />
            <path d="M21 32L1 20.500q-1.500-1.200 0-2.800L21 0v10.500L5.200 23q-1.200.8-2.200 0l-2-1.800 2-3z" fill="#1b86cc" />
            <path d="M21 0l9 4v24l-9 4z" fill="#2aa0ee" />
            <path d="M21 10v12l-8-6z" fill="#d3dfec" />
          </svg>
        </TaskIcon>
        <TaskIcon state="open">
          <Chrome>
            <div className="flex size-5 items-center justify-center bg-[#455a64] text-[11px] text-[#d5dde0]">P</div>
          </Chrome>
        </TaskIcon>
        <TaskIcon state="open">
          <svg width="29" height="32" viewBox="0 -1 29 32">
            <defs>
              <linearGradient id="steam" x1="0" y1="0" x2="0" y2="1">
                <stop offset="0" stopColor="#101a35" />
                <stop offset="1" stopColor="#1679b8" />
              </linearGradient>
            </defs>
            <circle cx="14.500" cy="15" r="14.500" fill="url(#steam)" />
            <path d="M0 15.500l9 3.500 6-5 3 3-5.500 4.500a4 4 0 0 1-7.500 1L0 20z" fill="#fff" />
            <circle cx="19" cy="11.500" r="4.500" fill="#15284f" stroke="#fff" strokeWidth="2" />
          </svg>
        </TaskIcon>
        <TaskIcon state="open">
          <svg width="30" height="32" viewBox="0 0 30 32">
            <path d="M8 0h14q8 0 8 8v14q0 8-8 8H10q-4 2-8 1 1-2 0-5-2-3-2-6V8q0-8 8-8z" fill="#0a62ee" />
            <path d="M10 1h12q7 0 7 8v12q0 8-8 8H10l-5 .5q1.500-2 0-4-3-4-3-9V9q0-8 8-8z" fill="#fff" />
            <text x="15.500" y="18.500" textAnchor="middle" fontSize="9.500" fontWeight="700" fill="#0a62ee" fontFamily="Open Sans">
              Zalo
            </text>
          </svg>
          <div className="absolute -top-[5px] -right-[6px] flex size-5 items-center justify-center rounded-full bg-[#fb0d0d] text-[12.500px] tracking-[-0.500px] text-white">
            5+
          </div>
        </TaskIcon>
        <TaskIcon state="open">
          <svg width="28" height="29" viewBox="0 0 28 29">
            <circle cx="14" cy="14.500" r="13" fill="#dfe4e4" stroke="#9bb0b8" strokeWidth="1.500" />
            <path d="M0 11Q8-1 19 3q4 2 4 7l-7-3q3 4 1 7-2-6-6-7-6 0-11 4z" fill="#63b32e" />
            <path d="M27.500 14q0 9-8 13.500 2-4 1-8l-4-5q3 0 4.500 1.500 1-3 3-5 3 0 3.500 3z" fill="#3a93c4" />
          </svg>
        </TaskIcon>
        <TaskIcon state="open">
          <svg width="28" height="29" viewBox="0 0 28 29">
            <circle cx="13" cy="13.500" r="12.500" fill="#dde1e1" stroke="#bcc6ca" />
            <path d="M0 11Q8-1 18 3q4 2 4 7l-7-3q3 4 1 7-2-6-6-7-6 0-10 4z" fill="#63b32e" />
            <g fill="#fff" stroke="#1d2d55" strokeWidth="1.200">
              <circle cx="19" cy="19.500" r="8" />
              <ellipse cx="19" cy="19.500" rx="3.800" ry="8" />
              <path d="M19 11.500v16M11.500 17h15M11.500 22h15" />
            </g>
          </svg>
        </TaskIcon>
      </div>
      <div className="ml-auto flex items-center">
        <svg width="14" height="8" viewBox="0 0 14 8" fill="none" stroke="#1b1b1b" strokeWidth="1.500">
          <path d="M1 7l6-6 6 6" />
        </svg>
        <span className="ml-[29px] text-[14.800px]">VIE</span>
        <svg width="20" height="15" viewBox="0 0 20 15" fill="none" stroke="#1b1b1b" strokeWidth="1.500" strokeLinecap="round" className="ml-[27px]">
          <path d="M1 5.500a12.500 12.500 0 0 1 18 0M3.800 8.300a8.700 8.700 0 0 1 12.400 0M6.500 11a4.800 4.800 0 0 1 7 0" />
          <circle cx="10" cy="13.200" r="1.200" fill="#1b1b1b" stroke="none" />
        </svg>
        <svg width="20" height="17" viewBox="0 0 20 17" fill="none" stroke="#1b1b1b" strokeWidth="1.400" strokeLinejoin="round" className="ml-[10px]">
          <path d="M1 6v5h3l4.500 4V2L4 6zM11 6q1.500 2.500 0 5" />
          <path d="M13 3.500q3.500 5 0 10M15.500 1.500q5 7 0 14" stroke="#a0a5ad" />
        </svg>
        <svg width="21" height="16" viewBox="0 0 21 16" fill="none" stroke="#1b1b1b" strokeWidth="1.500" className="ml-[9px]">
          <path d="M8 3h7.500a2 2 0 0 1 2 2v7.500a2 2 0 0 1-2 2H4a2 2 0 0 1-2-2V9" />
          <path d="M4.500 12.500V8L8 5.500h5v7z" fill="#1b1b1b" stroke="none" />
          <path d="M18.500 7h1.500v3.500h-1.500z" fill="#1b1b1b" />
          <path d="M4.500 0L.5 5.500h2.500L2 9l4.500-5H4z" fill="#1b1b1b" stroke="none" />
        </svg>
        <div className="mb-[3px] ml-[21px] text-right text-[14.600px] leading-5 whitespace-nowrap text-[#1b1b1b]">
          10:46 PM
          <br />
          3/31/2024
        </div>
        <svg width="18" height="20" viewBox="0 0 18 20" className="ml-[11px]">
          <path d="M2 14V8q0-6 6-7.500 5 0 6 5V14l2 2v1H0v-1zM5 18h6q-1 2-3 2t-3-2z" fill="#1b1b1b" />
          <path d="M5.500 7h4l-4 5.500h4" fill="none" stroke="#fff" strokeWidth="1.300" />
          <rect x="11" y="0" width="7" height="7" fill="#d6dbe7" />
          <path d="M12.500 1.500H17l-4.500 5H17" fill="none" stroke="#1b1b1b" strokeWidth="1.300" />
        </svg>
        <div className="relative mr-[26px] ml-[22px] flex">
          <Copilot size={28} uid="cpb" colors={['#1d60e8', '#18b5e0', '#f5c829', '#a35cf5', '#f5588e', '#2446c8']} />
          <div className="absolute top-[19px] left-[7px] flex h-[9px] w-[22px] items-center justify-center rounded-[3px] bg-[#fcc419] text-[8px] font-bold tracking-[0.500px]">
            PRE
          </div>
        </div>
      </div>
    </div>
  );
}

export default function App() {
  return (
    <div className="flex h-[1080px] w-[1920px] flex-col overflow-hidden bg-[#f7f7f7] font-['Open_Sans','Noto_Sans',sans-serif] text-black">
      <TabBar />
      <Toolbar />
      <div className="flex h-[932px] shrink-0">
        <div className="ml-[5px] flex h-[928px] w-[1860px] shrink-0 overflow-hidden rounded-xl shadow-[0_0_2px_1px_#dcdcdc]">
          <WavePanel />
          <WebPage />
        </div>
        <EdgeSidebar />
      </div>
      <Taskbar />
    </div>
  );
}
